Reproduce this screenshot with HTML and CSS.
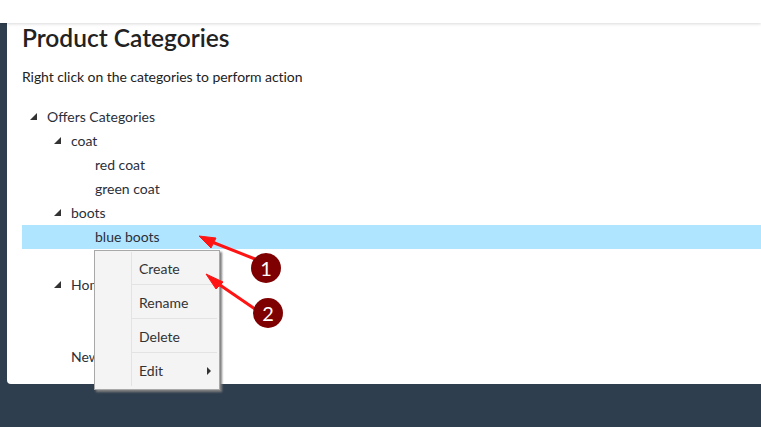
FILE: index.html
```html
<!DOCTYPE html>
<html lang="en">
<head>
    <meta charset="UTF-8">
    <title>Product Categories</title>
    <link rel="stylesheet" href="styles.css">
</head>
<body>
    <div class="topbar"></div>

    <div class="wrapper">
        <div class="panel">
            <h1>Product Categories</h1>
            <p class="hint">Right click on the categories to perform action</p>

            <div class="tree">
                <div class="row depth-0"><span class="toggle"></span>Offers Categories</div>
                <div class="row depth-1"><span class="toggle"></span>coat</div>
                <div class="row depth-2">red coat</div>
                <div class="row depth-2">green coat</div>
                <div class="row depth-1"><span class="toggle"></span>boots</div>
                <div class="row depth-2 selected">blue boots</div>
                <div class="row"></div>
                <div class="row depth-1"><span class="toggle"></span>Home</div>
                <div class="row"></div>
                <div class="row"></div>
                <div class="row depth-1">New</div>
            </div>
        </div>
    </div>

    <!-- Context menu -->
    <div class="menu">
        <div class="menu-item">Create</div>
        <div class="menu-item">Rename</div>
        <div class="menu-item">Delete</div>
        <div class="menu-item">Edit<span class="submenu-arrow"></span></div>
    </div>

    <!-- Callouts drawn over the screenshot -->
    <svg class="callouts" width="761" height="427" viewBox="0 0 761 427">
        <g fill="#ff1414" stroke="#ff1414">
            <path d="M255 259 L212 242" stroke-width="3" fill="none"/>
            <polygon points="199,236 216,238 211,248" stroke-width="1"/>
            <path d="M255 309 L217 283" stroke-width="3" fill="none"/>
            <polygon points="206,274 223,282 216,289" stroke-width="1"/>
        </g>
        <circle cx="266" cy="268" r="15" fill="#7f0000"/>
        <circle cx="268" cy="313" r="15" fill="#7f0000"/>
    </svg>
    <span class="badge badge-one">1</span>
    <span class="badge badge-two">2</span>
</body>
</html>
```

FILE: styles.css
```css
html, body {
    height: 100%;
}

body {
    margin: 0;
    overflow: hidden;
    background-color: #2f3e4e;
    font-family: Lato, "Open Sans", sans-serif;
    font-size: 14px;
    color: #2a2f3a;
}

.topbar {
    position: relative;
    height: 23px;
    background-color: white;
    box-shadow: 0 1px 3px rgba(0,0,0,0.15);
}

.wrapper {
    padding-left: 7px;
}

.panel {
    height: 361px;
    padding-left: 15px;
    background-color: white;
    border-bottom-left-radius: 4px;
}

h1 {
    margin: 0;
    padding-top: 1px;
    font-size: 24.5px;
    line-height: 28px;
    font-weight: 600;
    color: #222222;
}

.hint {
    margin: 0;
    padding-top: 15px;
    line-height: 20px;
    letter-spacing: -0.065px;
    color: #222222;
}

.tree {
    padding-top: 18px;
}

.row {
    position: relative;
    height: 24px;
    line-height: 24px;
}

.depth-0 {
    padding-left: 25px;
}

.depth-1 {
    padding-left: 49px;
}

.depth-2 {
    padding-left: 73px;
}

.selected {
    background-color: #b0e5ff;
}

.toggle {
    position: absolute;
    margin-left: -17px;
    margin-top: 8px;
    width: 0;
    height: 0;
    border-left: 7px solid transparent;
    border-bottom: 7px solid #333333;
}

.menu {
    position: absolute;
    left: 94px;
    top: 250px;
    width: 124px;
    height: 138px;
    background-color: #f4f4f4;
    border: 1px solid #a8a8a8;
    box-shadow: 2px 2px 2px #808080;
}

.menu::before {
    content: "";
    position: absolute;
    left: 36px;
    top: 1px;
    bottom: 3px;
    border-left: 1px solid #e3e3e3;
}

.menu-item {
    position: relative;
    height: 34px;
    line-height: 36px;
    margin: 0 2px 0 37px;
    padding-left: 7px;
    font-size: 14px;
    color: #333333;
    border-bottom: 1px solid #e3e3e3;
    box-sizing: border-box;
}

.menu-item:last-child {
    border-bottom: none;
}

.submenu-arrow {
    position: absolute;
    right: 6px;
    top: 14px;
    width: 0;
    height: 0;
    border-top: 4px solid transparent;
    border-bottom: 4px solid transparent;
    border-left: 4px solid #333333;
}

.callouts {
    position: absolute;
    left: 0;
    top: 0;
}

.badge {
    position: absolute;
    width: 30px;
    text-align: center;
    font-size: 20px;
    line-height: 30px;
    color: white;
}

.badge-one {
    left: 251px;
    top: 253px;
}

.badge-two {
    left: 253px;
    top: 298px;
}
```
